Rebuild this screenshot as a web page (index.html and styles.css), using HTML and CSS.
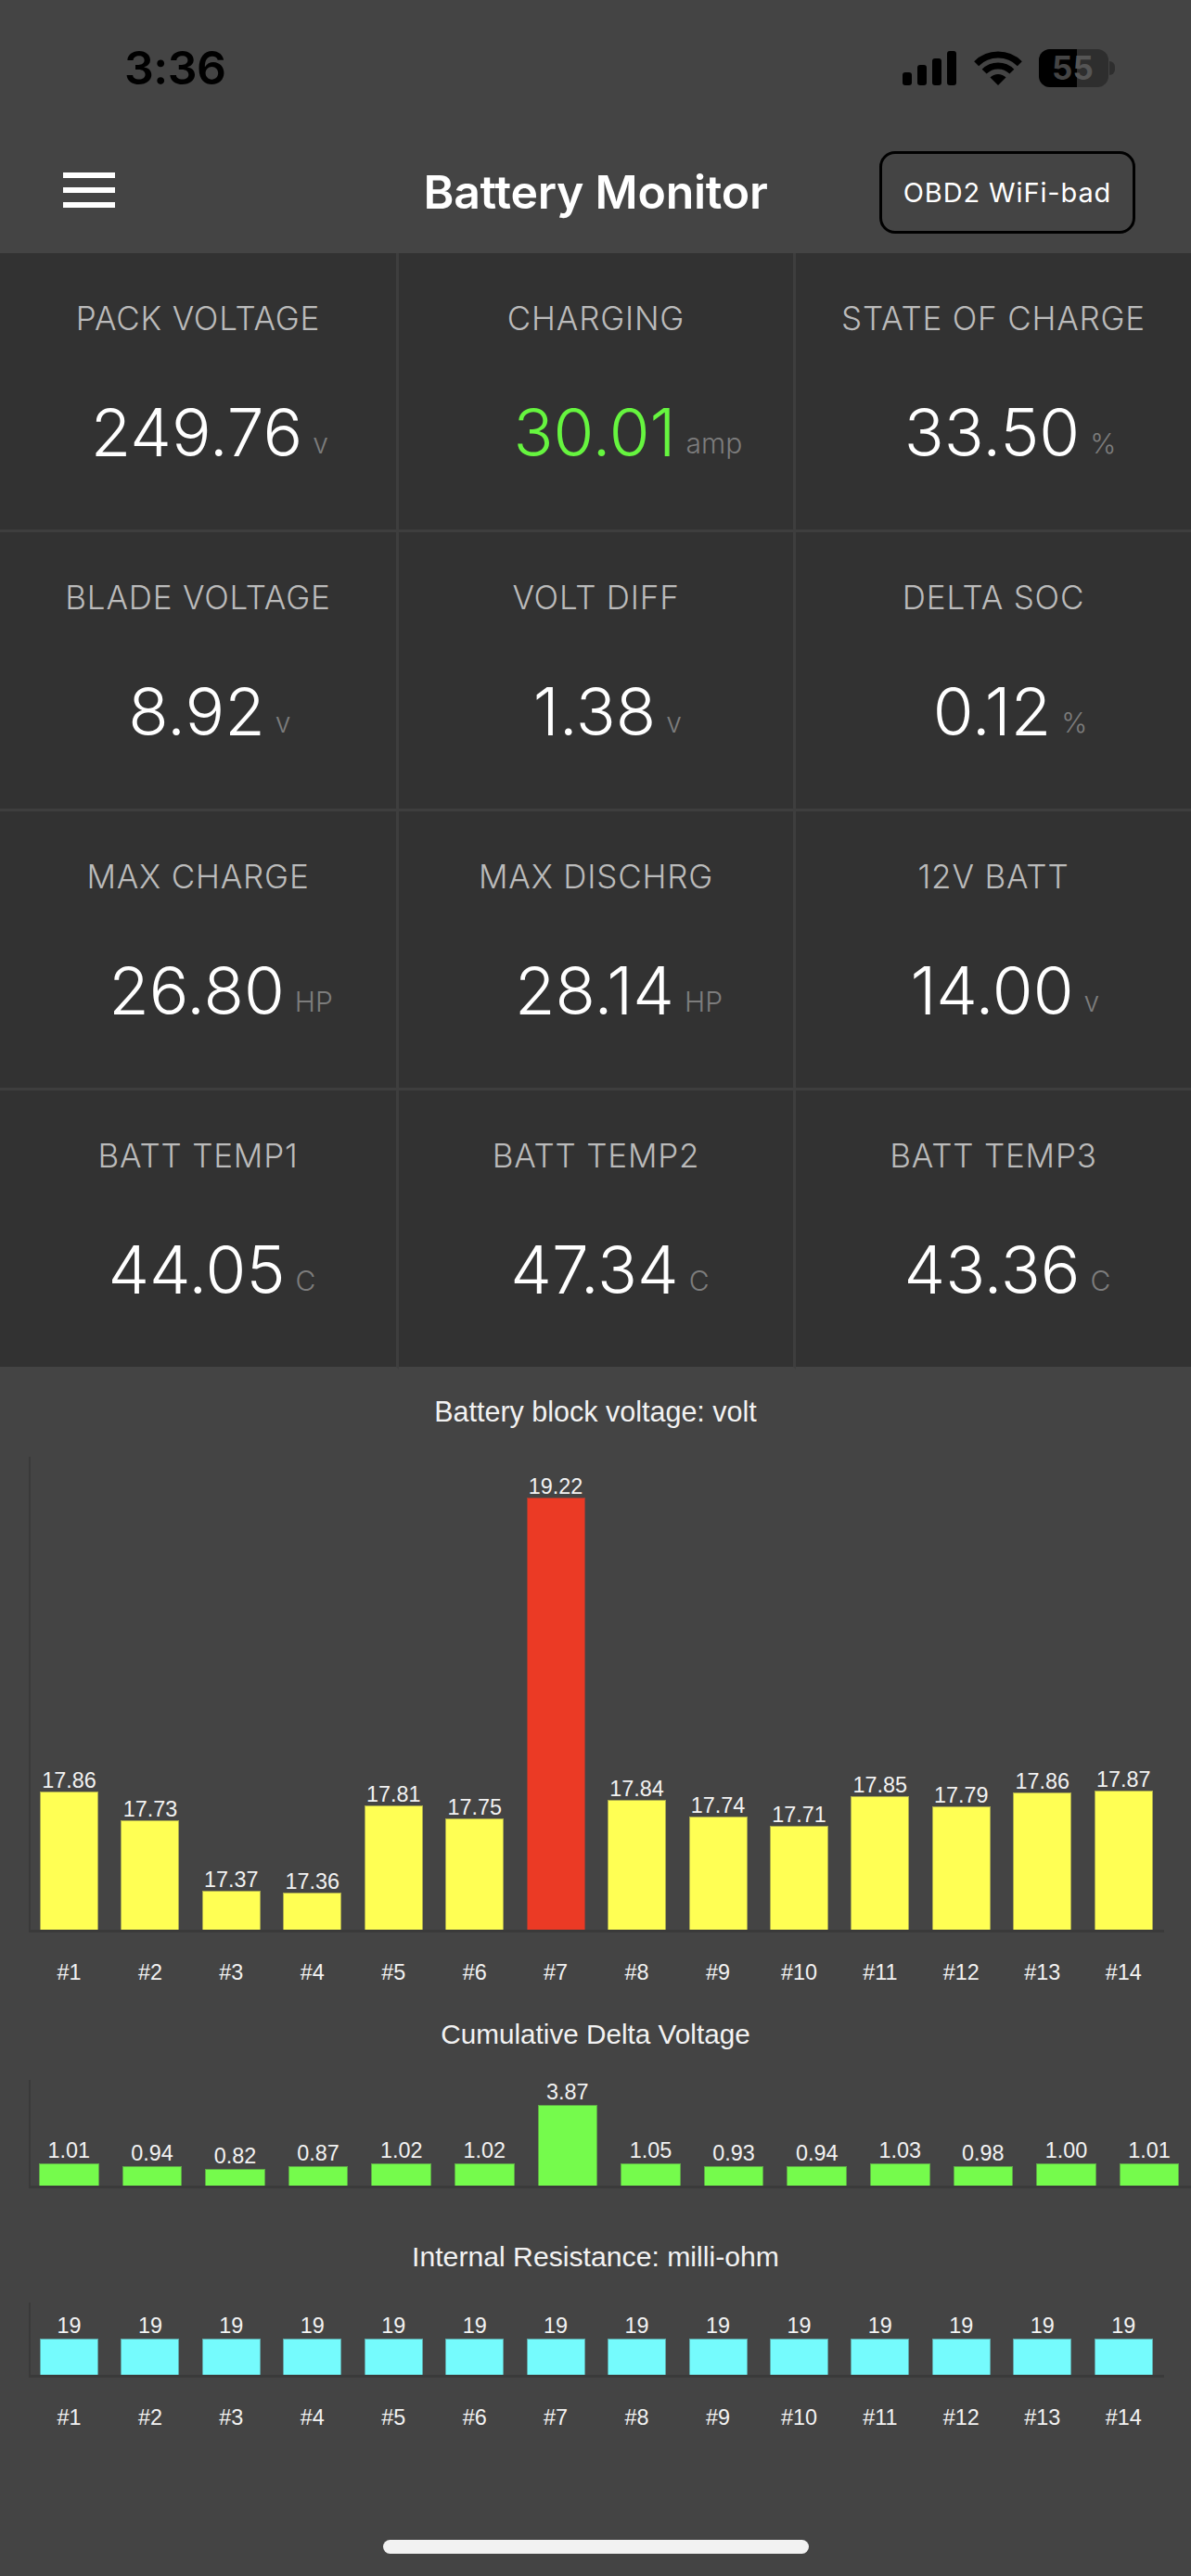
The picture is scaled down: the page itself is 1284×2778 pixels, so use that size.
FILE: index.html
```html
<!DOCTYPE html>
<html lang="en">
<head>
    <meta charset="UTF-8">
    <meta name="viewport" content="width=device-width, initial-scale=1.0">
    <title>Battery Monitor</title>
    <link rel="stylesheet" href="styles.css">
</head>
<body>
    <div class="status-bar">
        <div class="clock">3:36</div>
        <div class="status-icons">
            <svg class="signal" width="58" height="37" viewBox="0 0 58 37">
                <rect x="0" y="23" width="10" height="14" rx="3"/>
                <rect x="16" y="15" width="10" height="22" rx="3"/>
                <rect x="32" y="8" width="10" height="29" rx="3"/>
                <rect x="48" y="0" width="10" height="37" rx="3"/>
            </svg>
            <svg class="wifi" width="52" height="37" viewBox="0 0 52 37">
                <path d="M2.67 13.67A33 33 0 0 1 49.33 13.67" fill="none" stroke="#000" stroke-width="7"/>
                <path d="M11.15 22.15A21 21 0 0 1 40.85 22.15" fill="none" stroke="#000" stroke-width="7"/>
                <path d="M26 37L17.5 28.5A12 12 0 0 1 34.5 28.5Z"/>
            </svg>
            <div class="battery">
                <div class="battery-fill"></div>
                <div class="battery-level"><span>5</span><span class="dim">5</span></div>
            </div>
        </div>
    </div>

    <div class="nav">
        <div class="menu">
            <div></div>
            <div></div>
            <div></div>
        </div>
        <div class="nav-title">Battery Monitor</div>
        <div class="nav-right">
            <div class="obd-btn">OBD2 WiFi-bad</div>
        </div>
    </div>

    <div class="tiles">
        <div class="tile">
            <div class="tile-label">PACK VOLTAGE</div>
            <div class="tile-value">249.76<span class="unit">v</span></div>
        </div>
        <div class="tile">
            <div class="tile-label">CHARGING</div>
            <div class="tile-value green">30.01<span class="unit">amp</span></div>
        </div>
        <div class="tile">
            <div class="tile-label">STATE OF CHARGE</div>
            <div class="tile-value">33.50<span class="unit">%</span></div>
        </div>
        <div class="tile">
            <div class="tile-label">BLADE VOLTAGE</div>
            <div class="tile-value">8.92<span class="unit">v</span></div>
        </div>
        <div class="tile">
            <div class="tile-label">VOLT DIFF</div>
            <div class="tile-value">1.38<span class="unit">v</span></div>
        </div>
        <div class="tile">
            <div class="tile-label">DELTA SOC</div>
            <div class="tile-value">0.12<span class="unit">%</span></div>
        </div>
        <div class="tile">
            <div class="tile-label">MAX CHARGE</div>
            <div class="tile-value">26.80<span class="unit">HP</span></div>
        </div>
        <div class="tile">
            <div class="tile-label">MAX DISCHRG</div>
            <div class="tile-value">28.14<span class="unit">HP</span></div>
        </div>
        <div class="tile">
            <div class="tile-label">12V BATT</div>
            <div class="tile-value">14.00<span class="unit">v</span></div>
        </div>
        <div class="tile">
            <div class="tile-label">BATT TEMP1</div>
            <div class="tile-value">44.05<span class="unit">C</span></div>
        </div>
        <div class="tile">
            <div class="tile-label">BATT TEMP2</div>
            <div class="tile-value">47.34<span class="unit">C</span></div>
        </div>
        <div class="tile">
            <div class="tile-label">BATT TEMP3</div>
            <div class="tile-value">43.36<span class="unit">C</span></div>
        </div>
    </div>

    <!-- Block voltage -->
    <div class="chart-title first">Battery block voltage: volt</div>
    <div class="plot volts">
        <div class="col"><div class="val">17.86</div><div class="bar yellow" style="height:149px"></div></div>
        <div class="col"><div class="val">17.73</div><div class="bar yellow" style="height:118px"></div></div>
        <div class="col"><div class="val">17.37</div><div class="bar yellow" style="height:42px"></div></div>
        <div class="col"><div class="val">17.36</div><div class="bar yellow" style="height:40px"></div></div>
        <div class="col"><div class="val">17.81</div><div class="bar yellow" style="height:134px"></div></div>
        <div class="col"><div class="val">17.75</div><div class="bar yellow" style="height:120px"></div></div>
        <div class="col"><div class="val">19.22</div><div class="bar red" style="height:466px"></div></div>
        <div class="col"><div class="val">17.84</div><div class="bar yellow" style="height:140px"></div></div>
        <div class="col"><div class="val">17.74</div><div class="bar yellow" style="height:122px"></div></div>
        <div class="col"><div class="val">17.71</div><div class="bar yellow" style="height:112px"></div></div>
        <div class="col"><div class="val">17.85</div><div class="bar yellow" style="height:144px"></div></div>
        <div class="col"><div class="val">17.79</div><div class="bar yellow" style="height:133px"></div></div>
        <div class="col"><div class="val">17.86</div><div class="bar yellow" style="height:148px"></div></div>
        <div class="col"><div class="val">17.87</div><div class="bar yellow" style="height:150px"></div></div>
    </div>
    <div class="names">
        <div>#1</div><div>#2</div><div>#3</div><div>#4</div><div>#5</div><div>#6</div><div>#7</div>
        <div>#8</div><div>#9</div><div>#10</div><div>#11</div><div>#12</div><div>#13</div><div>#14</div>
    </div>

    <!-- Cumulative delta -->
    <div class="chart-title delta-title">Cumulative Delta Voltage</div>
    <div class="plot delta">
        <div class="col"><div class="val">1.01</div><div class="bar green-bar" style="height:24px"></div></div>
        <div class="col"><div class="val">0.94</div><div class="bar green-bar" style="height:21px"></div></div>
        <div class="col"><div class="val">0.82</div><div class="bar green-bar" style="height:18px"></div></div>
        <div class="col"><div class="val">0.87</div><div class="bar green-bar" style="height:21px"></div></div>
        <div class="col"><div class="val">1.02</div><div class="bar green-bar" style="height:24px"></div></div>
        <div class="col"><div class="val">1.02</div><div class="bar green-bar" style="height:24px"></div></div>
        <div class="col"><div class="val">3.87</div><div class="bar green-bar" style="height:87px"></div></div>
        <div class="col"><div class="val">1.05</div><div class="bar green-bar" style="height:24px"></div></div>
        <div class="col"><div class="val">0.93</div><div class="bar green-bar" style="height:21px"></div></div>
        <div class="col"><div class="val">0.94</div><div class="bar green-bar" style="height:21px"></div></div>
        <div class="col"><div class="val">1.03</div><div class="bar green-bar" style="height:24px"></div></div>
        <div class="col"><div class="val">0.98</div><div class="bar green-bar" style="height:21px"></div></div>
        <div class="col"><div class="val">1.00</div><div class="bar green-bar" style="height:24px"></div></div>
        <div class="col"><div class="val">1.01</div><div class="bar green-bar" style="height:24px"></div></div>
    </div>

    <!-- Internal resistance -->
    <div class="chart-title ohm-title">Internal Resistance: milli-ohm</div>
    <div class="plot ohms">
        <div class="col"><div class="val">19</div><div class="bar cyan"></div></div>
        <div class="col"><div class="val">19</div><div class="bar cyan"></div></div>
        <div class="col"><div class="val">19</div><div class="bar cyan"></div></div>
        <div class="col"><div class="val">19</div><div class="bar cyan"></div></div>
        <div class="col"><div class="val">19</div><div class="bar cyan"></div></div>
        <div class="col"><div class="val">19</div><div class="bar cyan"></div></div>
        <div class="col"><div class="val">19</div><div class="bar cyan"></div></div>
        <div class="col"><div class="val">19</div><div class="bar cyan"></div></div>
        <div class="col"><div class="val">19</div><div class="bar cyan"></div></div>
        <div class="col"><div class="val">19</div><div class="bar cyan"></div></div>
        <div class="col"><div class="val">19</div><div class="bar cyan"></div></div>
        <div class="col"><div class="val">19</div><div class="bar cyan"></div></div>
        <div class="col"><div class="val">19</div><div class="bar cyan"></div></div>
        <div class="col"><div class="val">19</div><div class="bar cyan"></div></div>
    </div>
    <div class="names">
        <div>#1</div><div>#2</div><div>#3</div><div>#4</div><div>#5</div><div>#6</div><div>#7</div>
        <div>#8</div><div>#9</div><div>#10</div><div>#11</div><div>#12</div><div>#13</div><div>#14</div>
    </div>

    <div class="home-bar"></div>
</body>
</html>
```

FILE: styles.css
```css
* {
    margin: 0;
    padding: 0;
    box-sizing: border-box;
}

body {
    width: 1284px;
    height: 2778px;
    overflow: hidden;
    background: #444444;
    color: #ffffff;
    font-family: 'Inter', 'Liberation Sans', sans-serif;
}

/* Status bar */
.status-bar {
    height: 146px;
    padding: 0 89px 0 134px;
    display: flex;
    align-items: center;
    justify-content: space-between;
    color: #000000;
}

.clock {
    font-size: 50px;
    font-weight: 600;
    letter-spacing: -0.01em;
}

.status-icons {
    display: flex;
    align-items: center;
    gap: 19px;
}

.wifi {
    margin-right: -1px;
}

.battery {
    position: relative;
    width: 75px;
    height: 41px;
    border-radius: 12px;
    background: #2e2e2e;
}

.battery::after {
    content: '';
    position: absolute;
    left: 76px;
    top: 13px;
    width: 6px;
    height: 15px;
    border-radius: 0 8px 8px 0;
    background: #2e2e2e;
}

.battery-fill {
    position: absolute;
    left: 0;
    top: 0;
    width: 41px;
    height: 41px;
    border-radius: 12px 0 0 12px;
    background: #000000;
}

.battery-level {
    position: absolute;
    left: 14px;
    top: 0;
    height: 41px;
    display: flex;
    align-items: center;
    font-size: 35px;
    font-weight: 700;
    color: #444444;
}

.battery-level .dim {
    color: #555555;
}

/* Nav */
.nav {
    height: 122px;
    margin-bottom: 5px;
    display: grid;
    grid-template-columns: 1fr auto 1fr;
    align-items: center;
}

.menu {
    margin-left: 68px;
    margin-top: -4px;
    width: 56px;
    display: flex;
    flex-direction: column;
    gap: 10px;
}

.menu div {
    height: 6px;
    background: #ffffff;
}

.nav-title {
    font-size: 50px;
    font-weight: 600;
    letter-spacing: -0.005em;
}

.nav-right {
    display: flex;
    justify-content: flex-end;
    padding-right: 60px;
}

.obd-btn {
    width: 276px;
    height: 89px;
    display: flex;
    align-items: center;
    justify-content: center;
    border: 3px solid #000000;
    border-radius: 17px;
    font-size: 29px;
    letter-spacing: 0.03em;
}

/* Tiles */
.tiles {
    display: grid;
    grid-template-columns: 430px 428px 426px;
    grid-auto-rows: 301px;
}

.tile {
    background: #323232;
    border-right: 3px solid #3e3e3e;
    border-bottom: 3px solid #3e3e3e;
    padding-top: 50px;
    display: flex;
    flex-direction: column;
    align-items: center;
}

.tile:nth-child(3n) {
    border-right: 0;
}

.tile:nth-child(n+10) {
    border-bottom-color: #444444;
}

.tile-label {
    font-size: 35px;
    line-height: 41px;
    font-weight: 300;
    letter-spacing: 0.8px;
    color: #bbbbbb;
}

.tile-value {
    position: relative;
    margin: 59px 0 0 -3px;
    font-size: 71px;
    line-height: 86px;
    font-weight: 300;
}

.tile-value.green {
    color: #66f53f;
}

.unit {
    position: absolute;
    left: 100%;
    bottom: 14px;
    margin-left: 11px;
    font-size: 30px;
    line-height: 34px;
    color: #7d7d7d;
}

/* Charts */
.chart-title {
    height: 36px;
    line-height: 36px;
    margin-bottom: 31px;
    text-align: center;
    font-family: 'Liberation Sans', sans-serif;
    font-size: 30.5px;
    color: #f2f2f2;
}

.chart-title.first {
    margin-top: 27px;
}

.chart-title.delta-title {
    margin-top: 34px;
    font-size: 29.7px;
}

.chart-title.ohm-title {
    margin-top: 56px;
    font-size: 30.2px;
}

.plot {
    display: flex;
    align-items: flex-end;
    margin-left: 30.5px;
    border-left: 2.5px solid #3a3a3a;
    border-bottom: 3px solid #3a3a3a;
    font-family: 'Liberation Sans', sans-serif;
    font-size: 23.4px;
    color: #f2f2f2;
}

.plot.volts,
.plot.ohms {
    width: 1224.5px;
    padding-left: 10.5px;
    gap: 24.45px;
}

.plot.volts {
    height: 513px;
}

.plot.delta {
    width: 1253.5px;
    height: 117px;
    padding-left: 9.5px;
    gap: 25px;
}

.plot.ohms {
    height: 80.5px;
}

.col {
    width: 63px;
    flex-shrink: 0;
    display: flex;
    flex-direction: column;
    align-items: center;
}

.delta .col {
    width: 64.6px;
}

.val {
    line-height: 24px;
    white-space: nowrap;
}

.delta .val,
.ohms .val {
    margin-bottom: 2px;
}

.bar {
    width: 100%;
    border: 1px solid rgba(68, 68, 68, 0.45);
    border-bottom: 0;
}

.bar.yellow {
    background: #ffff54;
}

.bar.red {
    background: #eb3a25;
}

.bar.green-bar {
    background: #75fb4c;
}

.bar.cyan {
    height: 39px;
    background: #75fbfd;
}

.names {
    display: flex;
    gap: 24.45px;
    margin-top: 28px;
    padding-left: 43px;
    font-family: 'Liberation Sans', sans-serif;
    font-size: 23.4px;
    line-height: 30px;
    color: #f2f2f2;
}

.names div {
    width: 63px;
    flex-shrink: 0;
    text-align: center;
}

.home-bar {
    width: 459px;
    height: 14.5px;
    margin: 117.5px 0 0 413px;
    border-radius: 8px;
    background: #f2f2f2;
}
```
